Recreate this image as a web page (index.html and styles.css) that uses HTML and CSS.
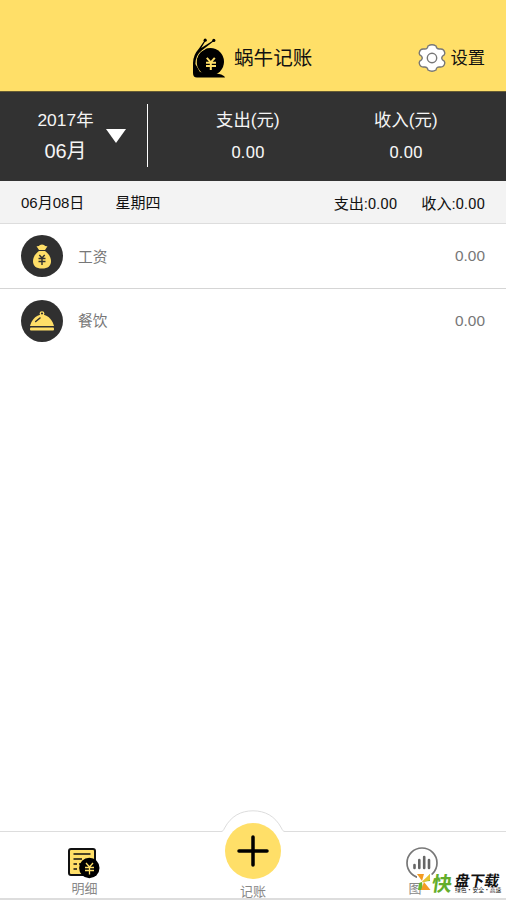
FILE: index.html
```html
<!DOCTYPE html>
<html lang="zh-CN">
<head>
<meta charset="utf-8">
<title>蜗牛记账</title>
<link rel="stylesheet" href="styles.css">
</head>
<body>
<div class="app">
  <header class="header">
    <div class="brand">
      <svg class="snail" width="34" height="42" viewBox="0 0 34 42">
        <circle cx="18.3" cy="24.8" r="13.7"/>
        <path d="M3.7 27C3.7 19 7 14.5 13.5 11.6" fill="none" stroke="#ffdf68" stroke-width="1.1"/>
        <path d="M12.8 3L7 11.5Q1 18 1 26V36Q1 40.5 5 40.5H33Q32 38 27 37L8 35L3.4 27Q3.5 18 10 13.2L22 4L21.4 3.2L9.2 11L13.8 3.6Z"/>
        <circle cx="13.2" cy="3.2" r="1.6"/><circle cx="21.8" cy="3.4" r="1.6"/>
        <path d="M14.8 20.8l4 4.5 4-4.5M14 25.8h10M14 29h10M18.8 25v8" fill="none" stroke="#ffdf68" stroke-width="2"/>
      </svg>
      <h1 class="title">蜗牛记账</h1>
    </div>
    <div class="settings">
      <svg width="28" height="30" viewBox="0 0 28 30">
        <path d="M10 3Q14 .5 18 3Q18.5 6.5 22 6Q26 5.5 26.8 10Q27 12 24.5 13.2Q23 15 24.5 16.8Q27 18 26.8 20Q26 24.5 22 24Q18.5 23.5 18 27Q14 29.5 10 27Q9.5 23.5 6 24Q2 24.5 1.2 20Q1 18 3.5 16.8Q5 15 3.5 13.2Q1 12 1.2 10Q2 5.5 6 6Q9.5 6.5 10 3Z" fill="#fff" stroke="#777" stroke-width="1.4"/>
        <circle cx="14" cy="15" r="4.7" fill="#fff" stroke="#777" stroke-width="1.4"/>
      </svg>
      <span>设置</span>
    </div>
  </header>
  <section class="summary">
    <div class="month">
      <div class="date"><span>2017年</span><b>06月</b></div>
      <svg width="20" height="14" viewBox="0 0 20 14"><path d="M0 0H20L10 14Z" fill="#fff"/></svg>
    </div>
    <div class="total"><span>支出(元)</span><span>0.00</span></div>
    <div class="total"><span>收入(元)</span><span>0.00</span></div>
  </section>
  <div class="day">
    <span>06月08日</span><span class="week">星期四</span>
    <span class="out">支出:0.00</span><span class="in">收入:0.00</span>
  </div>
  <main class="list">
    <div class="row">
      <svg width="42" height="42" viewBox="0 0 42 42">
        <circle cx="21" cy="21" r="21" fill="#303030"/>
        <path d="M15.5 11.3Q18 11.5 19 10Q21 9 23 10Q24 11.5 26.5 11.3L24 15H18Z" fill="#ffdf68"/>
        <path d="M18 16H24C27 18 30 22 30 26C30 31 27 33.5 21 33.5S12 31 12 26C12 22 15 18 18 16Z" fill="#ffdf68"/>
        <path d="M18.3 20L21 23L23.7 20M17.5 23.5H24.5M17.5 26.5H24.5M21 23V30" fill="none" stroke="#303030" stroke-width="1.4"/>
      </svg>
      <span class="name">工资</span><span class="amount">0.00</span>
    </div>
    <div class="row last">
      <svg width="42" height="42" viewBox="0 0 42 42">
        <circle cx="21" cy="21" r="21" fill="#303030"/>
        <circle cx="21" cy="13.6" r="1.8" fill="#303030" stroke="#ffdf68" stroke-width="1.3"/>
        <path d="M9 26C10 22 13.5 15 21 14.5C28.5 15 32 22 33 26Z" fill="#ffdf68"/>
        <path d="M14.7 21.5L19 18" stroke="#303030" stroke-width="1.6" stroke-linecap="round"/>
        <rect x="9" y="27.5" width="24" height="3" rx="1" fill="#ffdf68"/>
      </svg>
      <span class="name">餐饮</span><span class="amount">0.00</span>
    </div>
  </main>
  <nav class="tabs">
    <div class="tab detail">
      <svg width="34" height="34" viewBox="0 0 34 34">
        <rect x="3" y="3" width="26" height="26" rx="2" fill="#ffdf68" stroke="#111" stroke-width="2"/>
        <path d="M7.5 8H24.5M7.5 13H16M7.5 18H11M13 18H15M7.5 23H11" stroke="#111" stroke-width="1.6"/>
        <circle cx="23.3" cy="22" r="10.2" fill="#000"/>
        <path d="M20 17L23.5 21L27 17M19 21.5H28M19 24.5H28M23.5 21V28.5" fill="none" stroke="#ffdf68" stroke-width="1.3"/>
      </svg>
      <span>明细</span>
    </div>
    <div class="tab add">
      <svg width="64" height="70" viewBox="0 0 64 70">
        <path d="M1 21.5Q10 1 32 .8Q54 1 63 21.5V24H1Z" fill="#fff"/>
        <path d="M0 21.5C2 21.5 2.6 20 3.6 18C10 6 20 .8 32 .8S54 6 60.4 18C61.4 20 62 21.5 64 21.5" fill="none" stroke="#ddd"/>
        <circle cx="32" cy="41" r="28" fill="#ffdf68"/>
        <path d="M18 41H46M32 27V55" stroke="#000" stroke-width="3.5" stroke-linecap="round"/>
      </svg>
      <span>记账</span>
    </div>
    <div class="tab chart">
      <svg width="34" height="34" viewBox="0 0 34 34">
        <circle cx="17" cy="17" r="15" fill="#fff" stroke="#777" stroke-width="1.7"/>
        <path d="M9.5 22V19M14.3 22V14M19.2 22V11M24 22V14" stroke="#666" stroke-width="2.6" stroke-linecap="round"/>
      </svg>
      <span>图表</span>
    </div>
  </nav>
  <div class="watermark">
    <svg width="18" height="24" viewBox="0 0 18 24">
      <path d="M0 0H14L18 10V23H5V17H3L5 12L0 6Z" fill="#fff"/>
      <path d="M0 1H7L5 8Z" fill="#f49b22"/><path d="M13 1V8L7 8.5Z" fill="#7aba31"/>
      <path d="M13 1L5 8.5L6 9.5L13 7Z" fill="#e5c331"/>
      <path d="M2 10L5 9L6 17H1Z" fill="#6cb52d"/><path d="M7 9L13.5 17H4Z" fill="#f49b22"/>
    </svg>
    <span class="wm-first">快</span>
    <div class="wm-text"><span class="wm-name">盘下载</span><span class="wm-sub">绿色·安全·高速</span></div>
  </div>
</div>
</body>
</html>
```

FILE: styles.css
```css
* { box-sizing: border-box; }
body {
  margin: 0;
  background: #fff;
  color: #111;
  font-family: "Liberation Sans", "Noto Sans CJK SC", sans-serif;
}
svg { display: block; flex: none; }
.app {
  position: relative;
  display: flex;
  flex-direction: column;
  width: 506px;
  height: 900px;
  overflow: hidden;
}
.header {
  display: flex;
  justify-content: space-between;
  height: 91px;
  padding: 37px 21px 0 192px;
  background: #ffdf68;
}
.brand { display: flex; gap: 8px; }
.title { margin: 0; font-size: 19.6px; font-weight: 400; line-height: 43px; white-space: nowrap; }
.settings { display: flex; gap: 4px; height: 42px; align-items: center; font-size: 17.3px; }
.settings span { margin-top: -3px; }
.summary {
  display: flex;
  height: 90px;
  background: #323232;
  border-top: 1px solid #655b34;
  color: #f5f5f5;
}
.month {
  display: flex;
  align-items: center;
  gap: 12px;
  width: 148px;
  height: 63px;
  margin-top: 12px;
  padding-left: 37px;
  border-right: 1px solid #fff;
}
.date { display: flex; flex-direction: column; align-items: center; width: 57px; white-space: nowrap; }
.date span { font-size: 17.4px; line-height: 31px; }
.date b { font-size: 20px; font-weight: 400; line-height: 31px; }
.total {
  display: flex;
  flex-direction: column;
  align-items: center;
  width: 158px;
  padding-top: 12px;
  font-family: Roboto, "Noto Sans CJK SC", sans-serif;
  font-size: 17.3px;
  line-height: 32px;
}
.total:nth-child(2) { width: 200px; }
.total:last-child { width: 116px; }
.day {
  display: flex;
  align-items: center;
  height: 43px;
  padding: 0 21px 1px;
  background: #f3f3f3;
  border-bottom: 1px solid #ddd;
  font-size: 15px;
}
.week { margin-left: 31px; }
.out { margin-left: auto; }
.in { margin-left: 24px; }
.out, .in { font-family: Roboto, "Noto Sans CJK SC", sans-serif; font-size: 15.2px; }
.list { flex: 1; }
.row {
  display: flex;
  align-items: center;
  height: 65px;
  padding: 0 21px;
  border-bottom: 1px solid #d5d5d5;
  color: #777;
}
.row.last { height: 63px; border: 0; }
.name { margin: -2px 0 0 15px; font-size: 14.7px; }
.amount { margin-left: auto; font-size: 15.4px; }
.tabs {
  display: flex;
  height: 69px;
  border-top: 1px solid #ddd;
  border-bottom: 2px solid #ddd;
  color: #888;
  font-size: 13px;
}
.tab { display: flex; flex-direction: column; align-items: center; width: 169px; line-height: 18px; }
.detail, .chart { padding-top: 14px; }
.detail svg { margin-left: -3px; }
.add { width: 168px; }
.add svg { margin-top: -22px; }
.add span { margin-top: 3px; }
.watermark {
  position: absolute;
  left: 417px;
  top: 873px;
  display: flex;
  align-items: flex-start;
  font-family: "Noto Sans CJK SC", sans-serif;
  font-weight: 700;
}
.wm-first { margin-left: -3px; font-size: 20px; line-height: 20px; color: #63ad2b; transform: skewX(-8deg); }
.wm-text { display: flex; flex-direction: column; margin-left: 3px; }
.wm-name { font-size: 14.8px; line-height: 14px; transform: skewX(-10deg); white-space: nowrap; }
.wm-sub { font-size: 5.8px; font-weight: 400; line-height: 5px; white-space: nowrap; }
```
